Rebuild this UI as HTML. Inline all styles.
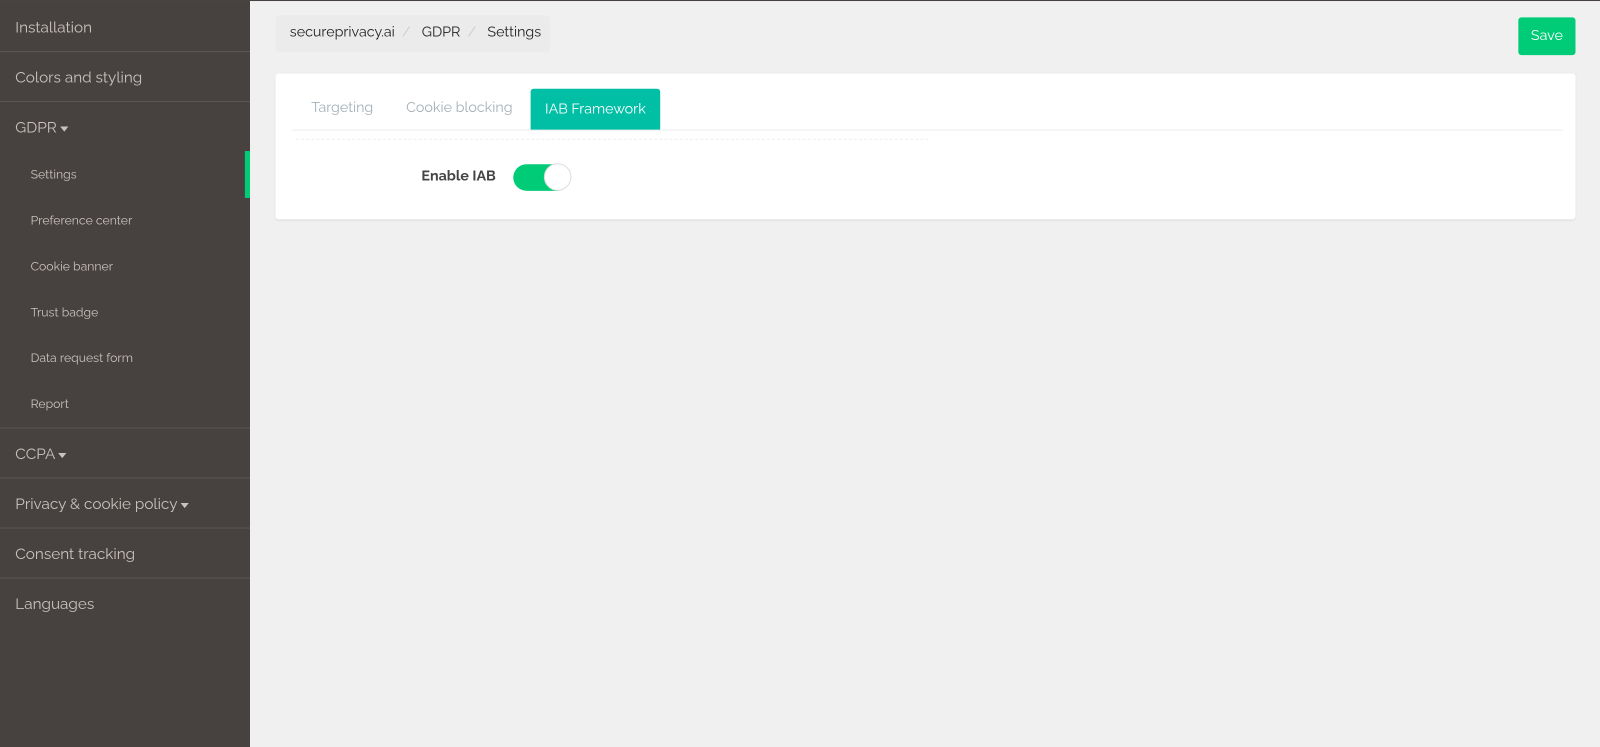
<!DOCTYPE html>
<html><head><style>
*{margin:0;padding:0;box-sizing:border-box}
html,body{width:1600px;height:747px;overflow:hidden;background:#f0f0f0}
body{font-family:"Raleway","Liberation Sans",sans-serif;position:relative}
.wrap{position:absolute;left:0;top:0;width:1568px;height:732px;transform:scale(1.0204);transform-origin:0 0;border-top:1px solid #474140}
.sb{position:absolute;left:0;top:0;width:245px;height:740px;background:#474140;color:#c9c3bf}
.it{position:absolute;left:15px;font-size:15px}
.sub{position:absolute;left:30px;font-size:12px}
.sep{position:absolute;left:0;width:245px;height:1px;background:#5c5654}
.car{display:inline-block;border-left:4px solid transparent;border-right:4px solid transparent;border-top:5px solid #c9c3bf;vertical-align:middle;margin-left:3px}
.bs{color:#ccc;padding:0 11px 0 7px}
</style></head><body>
<div class="wrap">
<div class="sb">
<div class="it" style="top:17px">Installation</div>
<div class="sep" style="top:49px"></div>
<div class="it" style="top:66px">Colors and styling</div>
<div class="sep" style="top:98px"></div>
<div class="it" style="top:115px">GDPR<span class="car"></span></div>
<div class="sub" style="top:163px">Settings</div>
<div style="position:absolute;left:240px;top:147px;width:5px;height:46px;background:#00cc77"></div>
<div class="sub" style="top:208px">Preference center</div>
<div class="sub" style="top:253px">Cookie banner</div>
<div class="sub" style="top:298px">Trust badge</div>
<div class="sub" style="top:343px">Data request form</div>
<div class="sub" style="top:388px">Report</div>
<div class="sep" style="top:418px"></div>
<div class="it" style="top:435px">CCPA<span class="car"></span></div>
<div class="sep" style="top:467px"></div>
<div class="it" style="top:484px">Privacy &amp; cookie policy<span class="car"></span></div>
<div class="sep" style="top:516px"></div>
<div class="it" style="top:533px">Consent tracking</div>
<div class="sep" style="top:565px"></div>
<div class="it" style="top:582px">Languages</div>
</div>
<div style="position:absolute;left:270px;top:14px;width:269px;height:36px;background:#ebebeb;border-radius:4px;font-size:14px;color:#222;padding:9px 14px;white-space:nowrap">secureprivacy.ai<span class="bs">/</span>GDPR<span class="bs">/</span>Settings</div>
<div style="position:absolute;left:1488px;top:16px;width:56px;height:37px;background:#00cc77;border-radius:3px;color:#fff;font-size:14px;text-align:center;line-height:37px">Save</div>
<div style="position:absolute;left:270px;top:71px;width:1274px;height:143px;background:#fff;border-radius:3px;box-shadow:0 1px 2px rgba(0,0,0,.08)">
<div style="position:absolute;left:16px;top:55px;width:1246px;height:1px;background:#eee"></div>
<div style="position:absolute;left:35px;top:26px;font-size:14px;color:#a3b0b7">Targeting</div>
<div style="position:absolute;left:128px;top:26px;font-size:14px;color:#a3b0b7">Cookie blocking</div>
<div style="position:absolute;left:250px;top:15px;width:127px;height:40px;background:#00bfa5;border-radius:3px 3px 0 0;color:#fff;font-size:14px;text-align:center;line-height:40px">IAB Framework</div>
<div style="position:absolute;left:20px;top:64px;width:620px;border-top:1px dashed #eee"></div>
<div style="position:absolute;left:143px;top:93px;font-size:14px;font-weight:bold;color:#444">Enable IAB</div>
<div style="position:absolute;left:233px;top:89px;width:56px;height:26px;border-radius:13px;background:#00cc77"></div>
<div style="position:absolute;left:263px;top:88px;width:27px;height:27px;border-radius:50%;background:#fff;border:1px solid #ddd"></div>
</div>
</div>
</body></html>
